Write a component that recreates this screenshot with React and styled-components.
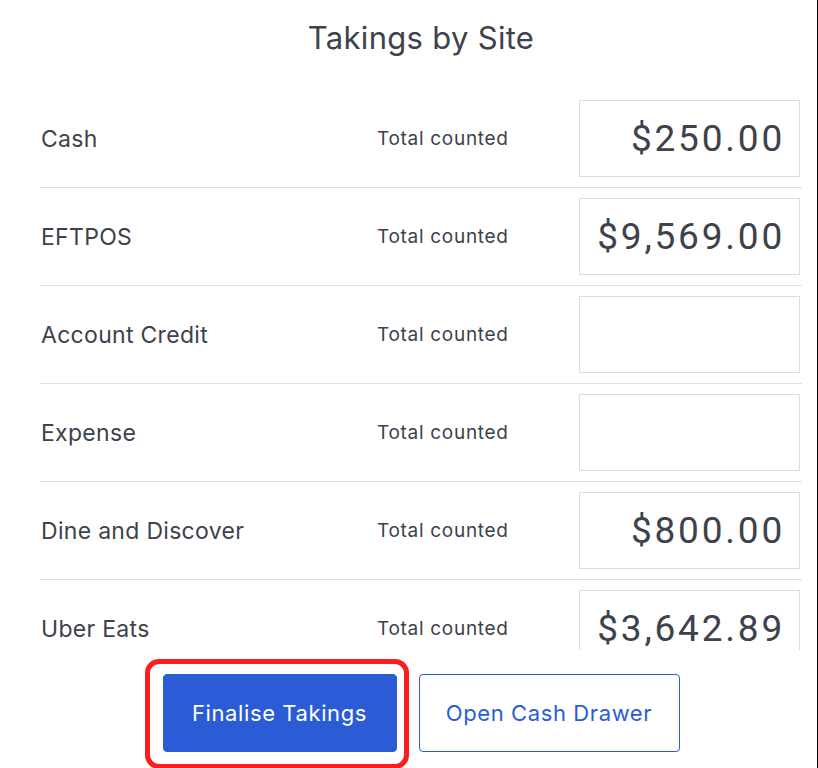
import React from 'react';
import styled, { createGlobalStyle } from 'styled-components';

const GlobalStyle = createGlobalStyle`
  html, body {
    margin: 0;
    padding: 0;
    background: #fff;
  }
  body {
    font-family: Inter, "Noto Sans", sans-serif;
    color: #3d424b;
    overflow: hidden;
  }
`;

const Page = styled.div`
  width: 818px;
  height: 768px;
  box-sizing: border-box;
  border-right: 1px solid #000;
  padding: 0 15px 0 40px;
  display: flex;
  flex-direction: column;
  overflow: hidden;
`;

const Title = styled.h2`
  margin: 0;
  height: 90px;
  padding-top: 18px;
  box-sizing: border-box;
  text-align: center;
  font-size: 31px;
  font-weight: 400;
  line-height: 40px;
  letter-spacing: 0.3px;
  color: #3d424b;
`;

const List = styled.div`
  height: 560px;
  overflow: hidden;
`;

const Row = styled.div`
  display: flex;
  align-items: center;
  padding: 10px 0;
  border-bottom: 1.5px solid #dde1e6;
`;

const Label = styled.div`
  flex: 1;
  font-size: 23px;
  letter-spacing: 0.3px;
  padding-left: 1px;
`;

const Caption = styled.div`
  width: 202px;
  font-size: 19px;
  letter-spacing: 0.7px;
`;

const AmountBox = styled.div`
  width: 221px;
  height: 77px;
  margin-right: 2px;
  box-sizing: border-box;
  border: 1.5px solid #dadee3;
  display: flex;
  align-items: center;
  justify-content: flex-end;
  padding-right: 14px;
  font-family: Roboto, "Liberation Sans", sans-serif;
  font-size: 37px;
  letter-spacing: 2.8px;
  color: #3d424b;
`;

const Actions = styled.div`
  display: flex;
  justify-content: center;
  gap: 22px;
  padding-top: 24px;
`;

const Highlight = styled.div`
  position: relative;

  &::before {
    content: '';
    position: absolute;
    top: -15px;
    left: -18px;
    right: -12px;
    bottom: -17px;
    border: 5px solid #fa1e1e;
    border-radius: 14px;
    pointer-events: none;
  }
`;

const Button = styled.button`
  height: 78px;
  box-sizing: border-box;
  border-radius: 4px;
  font-family: Inter, "Noto Sans", sans-serif;
  font-size: 22px;
  letter-spacing: 0.6px;
  cursor: pointer;
  border: 1.5px solid #2b5cd6;
  background: ${(p) => (p.$primary ? '#2b5cd6' : '#fff')};
  color: ${(p) => (p.$primary ? '#fff' : '#2b5cd6')};
  width: ${(p) => p.$width}px;
`;

const sites = [
  { name: 'Cash', amount: '$250.00' },
  { name: 'EFTPOS', amount: '$9,569.00' },
  { name: 'Account Credit', amount: '' },
  { name: 'Expense', amount: '' },
  { name: 'Dine and Discover', amount: '$800.00' },
  { name: 'Uber Eats', amount: '$3,642.89' },
];

export default function App() {
  return (
    <>
      <GlobalStyle />
      <Page>
        <Title>Takings by Site</Title>
        <List>
          {sites.map((s) => (
            <Row key={s.name}>
              <Label>{s.name}</Label>
              <Caption>Total counted</Caption>
              <AmountBox>{s.amount}</AmountBox>
            </Row>
          ))}
        </List>
        <Actions>
          <Highlight>
            <Button $primary $width={234}>Finalise Takings</Button>
          </Highlight>
          <Button $width={261}>Open Cash Drawer</Button>
        </Actions>
      </Page>
    </>
  );
}
